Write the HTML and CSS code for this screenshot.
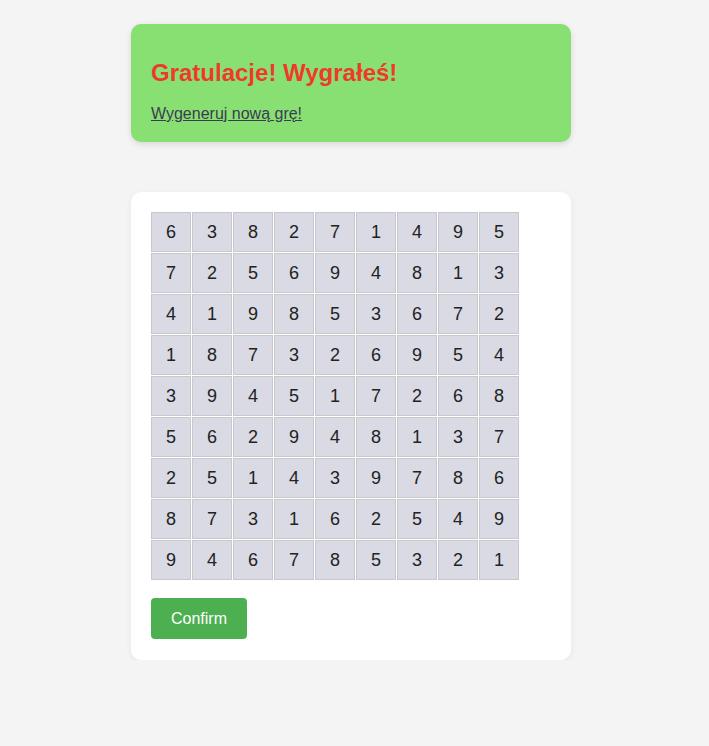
FILE: index.html
```html
<!DOCTYPE html>
<html lang="pl">
<head>
<meta charset="utf-8">
<link rel="stylesheet" href="styles.css">
</head>
<body>
<div class="wrap">
  <div class="win">
    <h2 class="win-title">Gratulacje! Wygrałeś!</h2>
    <a class="win-link" href="#">Wygeneruj nową grę!</a>
  </div>
  <div class="board-card">
    <div class="grid" id="grid"></div>
    <button class="confirm">Confirm</button>
  </div>
</div>
<script>
var rows = ["638271495","725694813","419853672","187326954","394517268","562948137","251439786","873162549","946785321"];
var g = document.getElementById("grid");
rows.forEach(function(r){ r.split("").forEach(function(c){ var d=document.createElement("div"); d.className="cell"; d.textContent=c; g.appendChild(d); }); });
</script>
</body>
</html>
```
FILE: styles.css
```css
html, body { margin: 0; padding: 0; }
body { background: #f4f4f4; font-family: "Liberation Sans", Arial, sans-serif; }
.wrap { width: 440px; margin-left: 131px; padding-top: 24px; }
.win {
  background: #89e072;
  border-radius: 10px;
  padding: 35px 20px 19px;
  box-shadow: 0 2px 6px rgba(0,0,0,0.12);
}
.win-title { margin: 0 0 19px; font-size: 24px; font-weight: bold; color: #ee3a2a; line-height: 27px; }
.win-link { display: block; font-size: 16px; line-height: 18px; color: #3b3b55; text-decoration: underline; }
.board-card {
  margin-top: 50px;
  background: #fff;
  border-radius: 10px;
  padding: 20px 20px 21px;
  box-shadow: 0 2px 6px rgba(0,0,0,0.06);
}
.grid { display: grid; grid-template-columns: repeat(9, 40px); gap: 1px; width: max-content; }
.cell {
  box-sizing: border-box;
  height: 40px;
  background: #d9dae3;
  border: 1px solid #c8c8cc;
  display: flex; align-items: center; justify-content: center;
  font-size: 18px; color: #222;
}
.confirm {
  margin-top: 18px;
  width: 96px; height: 41px;
  background: #4caf50; color: #fff;
  border: 0; border-radius: 4px;
  font-family: "Liberation Sans", Arial, sans-serif; font-size: 16px;
}
```
